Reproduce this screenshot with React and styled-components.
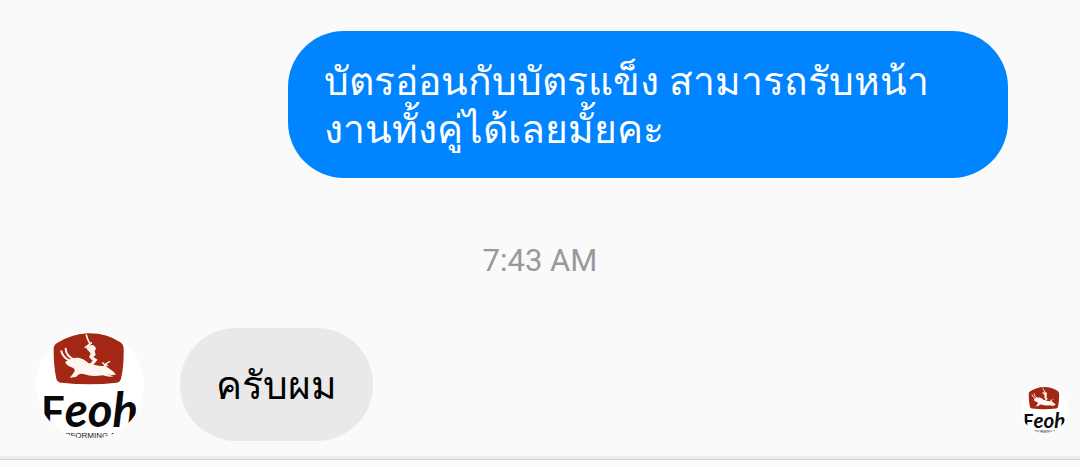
import React, { useId } from 'react';
import styled, { createGlobalStyle } from 'styled-components';

const GlobalStyle = createGlobalStyle`
  * { box-sizing: border-box; }
  body {
    margin: 0;
    background: #fafafa;
    font-family: Roboto, "Noto Sans", sans-serif;
  }
`;

const Conversation = styled.main`
  display: flex;
  flex-direction: column;
  padding-top: 31px;
`;

const MessageRow = styled.section`
  display: flex;
  align-items: center;
  justify-content: ${({ $sent }) => ($sent ? 'flex-end' : 'flex-start')};
  gap: 36px;
  padding: ${({ $sent }) => ($sent ? '0 72px' : '0 12px 0 36px')};
`;

const Bubble = styled.p`
  display: flex;
  align-items: center;
  max-width: 720px;
  min-height: 113px;
  margin: 0;
  padding: 25px 36px 26px;
  border-radius: 56px;
  background: ${({ $sent }) => ($sent ? '#0084ff' : '#e9e9e9')};
  color: ${({ $sent }) => ($sent ? '#fff' : '#000')};
  font-family: "Noto Sans", serif;
  font-size: 39px;
  line-height: 48px;
`;

const Timestamp = styled.time`
  align-self: center;
  margin: 64px 0 48px;
  color: #999;
  font-size: 31px;
  line-height: 38px;
`;

const AvatarImage = styled.svg`
  display: block;
  flex: none;
  width: ${({ $size }) => $size}px;
  height: ${({ $size }) => $size}px;
`;

const SeenBy = styled.div`
  align-self: flex-end;
  margin-left: auto;
  padding-bottom: 8px;
`;

const ComposerEdge = styled.footer`
  height: 11px;
  margin-top: 15px;
  border-top: 3px solid #ececec;
  box-shadow: inset 0 1px #d5d5d5;
  background: #fcfcfc;
`;

function Avatar({ size }) {
  const clip = useId();
  return (
    <AvatarImage $size={size} viewBox="18 31 324 324" role="img" aria-label="Feoh Performing Arts">
      <clipPath id={clip}><circle cx="180" cy="193" r="162" /></clipPath>
      <g clipPath={`url(#${clip})`}>
        <rect x="18" y="31" width="324" height="324" fill="#fff" />
        <path d="M71 81Q72 72 81 67Q125 40 175 38Q230 37 271 65Q281 72 281 84Q282 136 273 174Q270 184 260 186Q180 196 94 186Q82 185 79 174Q70 132 71 81Z" fill="#a22714" />
        <g fill="#fff7ef">
          <path d="M105 125Q120 110 145 111Q162 114 175 127L195 133Q211 137 225 135Q236 142 247 150L258 161Q250 165 239 162L228 160L251 167Q238 171 218 164Q184 169 163 161Q152 157 145 162L138 169L119 171Q127 162 133 153Q137 145 128 141Q113 138 105 125Z" />
          <path d="M178 77Q186 69 193 76Q202 84 194 90L197 103L190 109L203 117L187 136L177 133L188 120L177 109L182 99L174 86Z" />
        </g>
        <g fill="none" stroke="#fff7ef" strokeLinecap="round" strokeLinejoin="round">
          <path d="M94 92Q100 114 124 122M107 84Q107 105 133 117" strokeWidth="6" />
          <path d="M169 43L172 53L180 70L172 83L182 94M166 80L184 67" strokeWidth="5" />
          <path d="M218 126L226 136L231 127L239 123M226 129L232 135" strokeWidth="4" />
        </g>
        <text x="33" y="318" fill="#090909" fontFamily="Lato, sans-serif" fontWeight="700">
          <tspan fontSize="126">F</tspan><tspan fontSize="142" fontStyle="italic">eoh</tspan>
        </text>
        <text x="72" y="353" fill="#111" fontSize="24" fontFamily="Liberation Sans, sans-serif">PERFORMING ARTS</text>
      </g>
    </AvatarImage>
  );
}

export default function App() {
  return (
    <>
      <GlobalStyle />
      <Conversation>
        <MessageRow $sent>
          <Bubble $sent lang="th">บัตรอ่อนกับบัตรแข็ง สามารถรับหน้างานทั้งคู่ได้เลยมั้ยคะ</Bubble>
        </MessageRow>
        <Timestamp dateTime="07:43">7:43 AM</Timestamp>
        <MessageRow>
          <Avatar size={108} />
          <Bubble lang="th">ครับผม</Bubble>
          <SeenBy><Avatar size={47} /></SeenBy>
        </MessageRow>
        <ComposerEdge />
      </Conversation>
    </>
  );
}
